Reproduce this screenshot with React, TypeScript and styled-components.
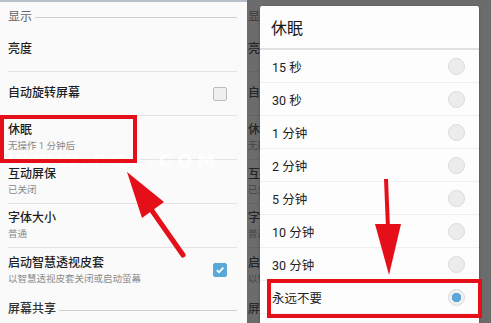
import React from 'react'
import styled, { createGlobalStyle } from 'styled-components'

const GlobalStyle = createGlobalStyle`
  html, body { margin: 0; padding: 0; background: #fff; }
  body { font-family: Roboto, "Noto Sans CJK SC", sans-serif; }
`

type Setting = { title: string; sub?: string; check?: 'off' | 'on' }

const settings: Setting[] = [
    { title: '亮度' },
    { title: '自动旋转屏幕', check: 'off' },
    { title: '休眠', sub: '无操作 1 分钟后' },
    { title: '互动屏保', sub: '已关闭' },
    { title: '字体大小', sub: '普通' },
    {
        title: '启动智慧透视皮套',
        sub: '以智慧透视皮套关闭或启动萤幕',
        check: 'on',
    },
]

const options = [
    '15 秒',
    '30 秒',
    '1 分钟',
    '2 分钟',
    '5 分钟',
    '10 分钟',
    '30 分钟',
    '永远不要',
]

const SettingsList = ({ inset }: { inset: number }) => (
    <List $inset={inset}>
        <Header $h={26}>
            <span>显示</span>
            <HeaderLine />
        </Header>
        {settings.map((s) => (
            <Row key={s.title}>
                <RowText>
                    <Title>{s.title}</Title>
                    {s.sub && <Sub>{s.sub}</Sub>}
                </RowText>
                {s.check && (
                    <Checkbox $on={s.check === 'on'}>
                        {s.check === 'on' && (
                            <svg width="10" height="10" viewBox="0 0 10 10">
                                <path
                                    d="M1.8 5.2 L4 7.3 L8.3 2.7"
                                    fill="none"
                                    stroke="#fff"
                                    strokeWidth="1.8"
                                />
                            </svg>
                        )}
                    </Checkbox>
                )}
            </Row>
        ))}
        <Header $h={31} $dark>
            <span>屏幕共享</span>
            <HeaderLine />
        </Header>
    </List>
)

const App = () => {
    return (
        <Frame>
            <GlobalStyle />
            <LeftPanel>
                <SettingsList inset={8} />
            </LeftPanel>
            <RightPanel>
                <Backdrop>
                    <SettingsList inset={1} />
                </Backdrop>
                <Dim />
                <Dialog>
                    <DialogTitle>休眠</DialogTitle>
                    {options.map((o, i) => (
                        <Option key={o}>
                            <span>{o}</span>
                            <Radio $on={i === options.length - 1} />
                        </Option>
                    ))}
                </Dialog>
            </RightPanel>
            <Watermark>WWW.PC6.COM</Watermark>
            <Marks width="491" height="323" viewBox="0 0 491 323">
                <rect
                    x="2"
                    y="117"
                    width="133"
                    height="44"
                    fill="none"
                    stroke="#e50f1a"
                    strokeWidth="4"
                />
                <line
                    x1="183"
                    y1="255"
                    x2="148"
                    y2="205"
                    stroke="#e50f1a"
                    strokeWidth="5"
                    strokeLinecap="round"
                />
                <polygon points="127,172 164,202 142,218" fill="#e50f1a" />
                <rect
                    x="269"
                    y="281"
                    width="211"
                    height="35"
                    fill="none"
                    stroke="#e50f1a"
                    strokeWidth="4"
                />
                <line
                    x1="386"
                    y1="179"
                    x2="388"
                    y2="228"
                    stroke="#e50f1a"
                    strokeWidth="4"
                />
                <polygon points="375,224 401,224 389,275" fill="#e50f1a" />
            </Marks>
        </Frame>
    )
}

export default App

const Frame = styled.div`
  position: relative;
  width: 491px;
  height: 323px;
  display: flex;
  overflow: hidden;
  background: #fff;
`

const LeftPanel = styled.div`
  width: 247px;
  height: 323px;
  background: #fafafa;
  border-top: 2px solid #b7c0c9;
  box-sizing: border-box;
`

const RightPanel = styled.div`
  position: relative;
  flex: 1;
  height: 323px;
  background: #fafafa;
  overflow: hidden;
  padding-top: 2px;
  box-sizing: border-box;
`

const Backdrop = styled.div`
  width: 13px;
  overflow: hidden;
  & > div {
    width: 230px;
  }
`

const List = styled.div<{ $inset: number }>`
  display: flex;
  flex-direction: column;
  padding: 0 10px 0 ${(p) => p.$inset}px;
`

const Header = styled.div<{ $h: number; $dark?: boolean }>`
  height: ${(p) => p.$h}px;
  display: flex;
  align-items: center;
  gap: 3px;
  font-size: 12px;
  color: ${(p) => (p.$dark ? '#333' : '#666')};
  font-weight: ${(p) => (p.$dark ? 500 : 400)};
`

const HeaderLine = styled.div`
  flex: 1;
  height: 1px;
  margin-top: 5px;
  background: #cfcfcf;
`

const Row = styled.div`
  height: 44px;
  box-sizing: border-box;
  display: flex;
  align-items: center;
  justify-content: space-between;
  padding-right: 10px;
  border-bottom: 1px solid #e4e4e4;
  &:nth-last-child(2) {
    border-bottom: none;
  }
`

const RowText = styled.div`
  display: flex;
  flex-direction: column;
  gap: 3px;
`

const Title = styled.div`
  font-size: 12px;
  line-height: 13px;
  color: #1e1e1e;
  font-weight: 500;
`

const Sub = styled.div`
  font-size: 9.5px;
  line-height: 11px;
  color: #8a8a8a;
`

const Checkbox = styled.div<{ $on: boolean }>`
  width: 14px;
  height: 14px;
  box-sizing: border-box;
  border-radius: 2px;
  display: flex;
  align-items: center;
  justify-content: center;
  background: ${(p) => (p.$on ? '#5aa8d8' : '#efefef')};
  border: 1px solid ${(p) => (p.$on ? '#5aa8d8' : '#bdbdbd')};
`

const Dim = styled.div`
  position: absolute;
  inset: 0;
  background: rgba(40, 40, 40, 0.68);
`

const Dialog = styled.div`
  position: absolute;
  top: 6px;
  left: 13px;
  right: 12px;
  bottom: -12px;
  background: #fdfdfd;
  border-radius: 2px;
  box-shadow: 0 1px 3px rgba(0, 0, 0, 0.3);
  display: flex;
  flex-direction: column;
`

const DialogTitle = styled.div`
  height: 42px;
  display: flex;
  align-items: center;
  padding-left: 11px;
  font-size: 16px;
  color: #1a1a1a;
  border-bottom: 2px solid #e0e0e0;
`

const Option = styled.div`
  height: 33px;
  box-sizing: border-box;
  display: flex;
  align-items: center;
  justify-content: space-between;
  padding: 0 14px 0 12px;
  font-size: 12.5px;
  color: #222;
  border-bottom: 1px solid #efefef;
`

const Radio = styled.div<{ $on: boolean }>`
  width: 17px;
  height: 17px;
  box-sizing: border-box;
  border-radius: 50%;
  background: ${(p) =>
      p.$on
          ? 'radial-gradient(circle, #5ba6d6 0 4.5px, #f0f0f0 5px)'
          : '#ececec'};
  border: 1px solid #dadada;
`

const Watermark = styled.div`
  position: absolute;
  left: 8px;
  top: 150px;
  font-family: "DejaVu Sans", sans-serif;
  font-size: 18px;
  font-weight: 700;
  letter-spacing: 5px;
  color: rgba(255, 255, 255, 0.9);
  pointer-events: none;
`

const Marks = styled.svg`
  position: absolute;
  inset: 0;
  pointer-events: none;
`
